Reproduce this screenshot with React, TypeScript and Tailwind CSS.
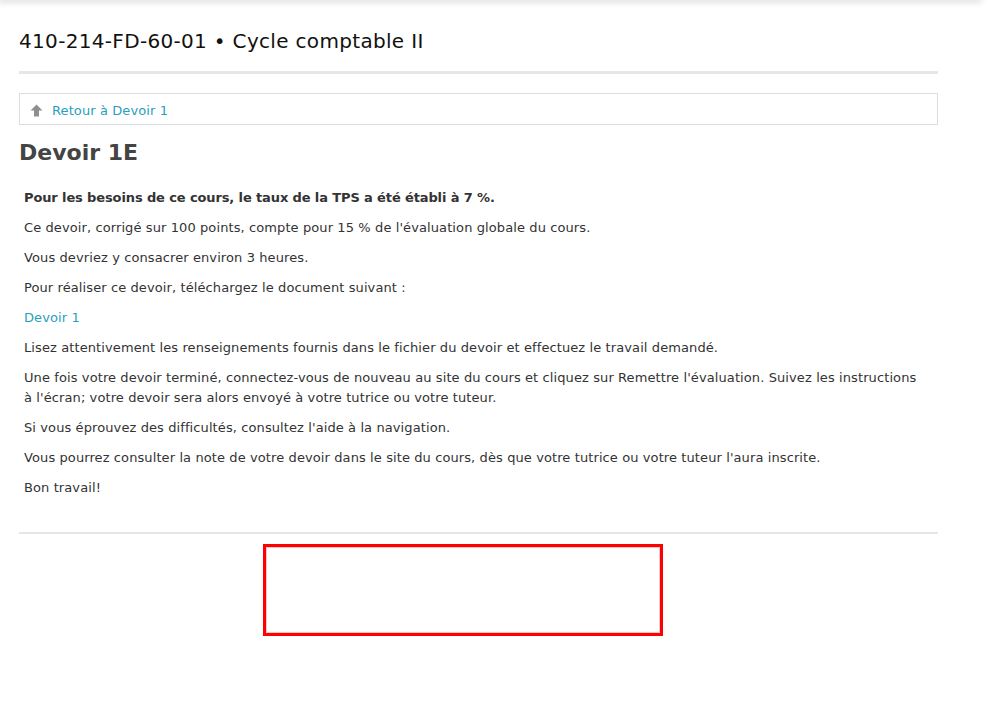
const paragraphs = [
  "Ce devoir, corrigé sur 100 points, compte pour 15 % de l'évaluation globale du cours.",
  "Vous devriez y consacrer environ 3 heures.",
  "Pour réaliser ce devoir, téléchargez le document suivant :",
];

const after = [
  "Si vous éprouvez des difficultés, consultez l'aide à la navigation.",
  "Vous pourrez consulter la note de votre devoir dans le site du cours, dès que votre tutrice ou votre tuteur l'aura inscrite.",
  "Bon travail!",
];

export default function App() {
  return (
    <div className="min-h-[704px] bg-white font-['DejaVu_Sans',Verdana,sans-serif]">
      {/* top shadow strip */}
      <div className="h-0 w-[980px] shadow-[0_0_6px_2px_rgba(0,0,0,0.18)]" />

      <div className="w-[919px] ml-[19px]">
        <header className="pt-[28px] pb-[17px] border-b-[3px] border-[#e6e6e6]">
          <h1 className="text-[20px] leading-[26px] tracking-[0.32px] text-[#111]">
            410-214-FD-60-01 • Cycle comptable II
          </h1>
        </header>

        <div className="mt-[19px] h-[32px] border border-[#dddddd] flex items-center pl-[10px] pt-[4px] gap-[9px]">
          <svg width="13" height="13" viewBox="0 0 13 13" className="text-[#8f8f8f] -mt-[2px]">
            <path d="M6.5 0.5 L12.5 6.5 L9 6.5 L9 12.5 L4 12.5 L4 6.5 L0.5 6.5 Z" fill="currentColor" />
          </svg>
          <a className="text-[13px] tracking-[0.1px] text-[#2a9fbd]">Retour à Devoir 1</a>
        </div>

        <h2 className="mt-[12px] text-[22px] leading-[32px] font-bold text-[#444]">Devoir 1E</h2>

        <div className="mt-[19px] px-[5px] pb-[24px] text-[13px] leading-[20px] tracking-[0.1px] text-[#333] border-b-2 border-[#e6e6e6]">
          <p className="font-bold tracking-[-0.12px] mb-[10px]">
            Pour les besoins de ce cours, le taux de la TPS a été établi à 7 %.
          </p>
          {paragraphs.map((t) => (
            <p key={t} className="mb-[10px]">{t}</p>
          ))}
          <p className="mb-[10px]">
            <a className="text-[#2a9fbd]">Devoir 1</a>
          </p>
          <p className="mb-[10px]">
            Lisez attentivement les renseignements fournis dans le fichier du devoir et effectuez le travail demandé.
          </p>
          <p className="mb-[10px]">
            Une fois votre devoir terminé, connectez-vous de nouveau au site du cours et cliquez sur Remettre l'évaluation. Suivez les instructions
            <br />à l'écran; votre devoir sera alors envoyé à votre tutrice ou votre tuteur.
          </p>
          {after.map((t) => (
            <p key={t} className="mb-[10px]">{t}</p>
          ))}
        </div>

        <div className="mt-[10px] ml-[244px] w-[400px] h-[92px] border-[3px] border-[#ff0000]">
          <div className="h-full border border-[#f3c9c9]" />
        </div>
      </div>
    </div>
  );
}
